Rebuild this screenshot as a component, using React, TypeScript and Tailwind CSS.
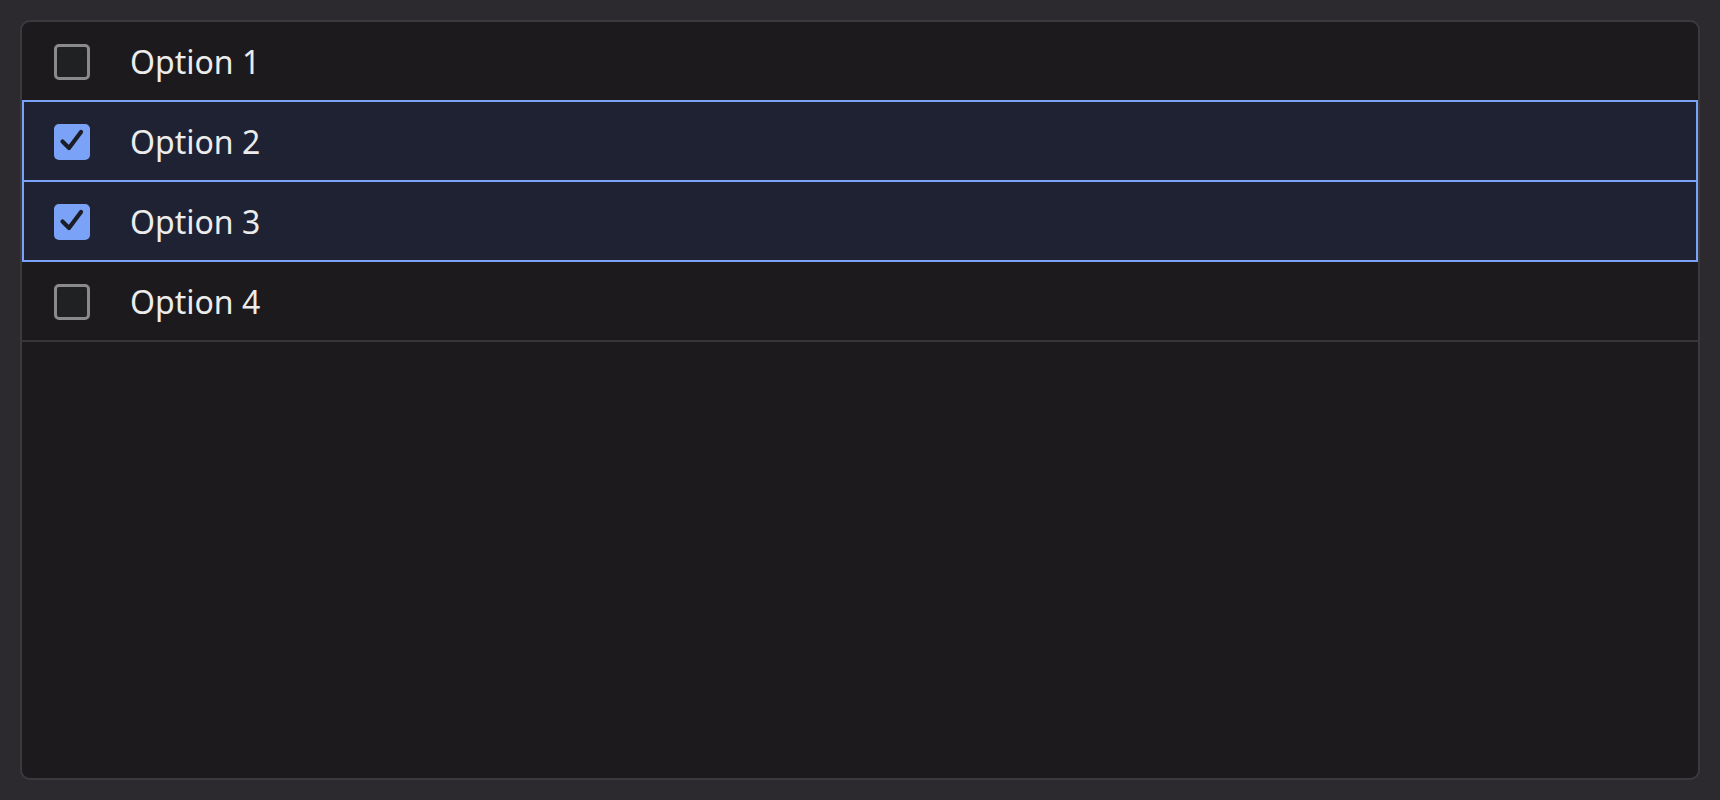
import { useState } from "react";

const options = ["Option 1", "Option 2", "Option 3", "Option 4"];

function Check({ checked }: { checked: boolean }) {
  if (!checked) {
    return <span className="block w-[36px] h-[36px] shrink-0 rounded-[5px] border-[3px] border-[#8a8a8c] bg-[#202123]" />;
  }
  return (
    <span className="flex w-[36px] h-[36px] shrink-0 items-center justify-center rounded-[5px] bg-[#7aa2f7]">
      <svg viewBox="0 0 36 36" className="w-[36px] h-[36px]" fill="none">
        <path d="M8.5 17.5 L15 24 L27 8" stroke="#1c1d27" strokeWidth="4.2" strokeLinecap="round" strokeLinejoin="round" />
      </svg>
    </span>
  );
}

export default function App() {
  const [selected, setSelected] = useState<string[]>(["Option 2", "Option 3"]);

  const toggle = (name: string) =>
    setSelected((s) => (s.includes(name) ? s.filter((x) => x !== name) : [...s, name]));

  return (
    <div className="w-[1720px] h-[800px] bg-[#2c2a2e] p-[20px]" style={{ fontFamily: '"Noto Sans", "Open Sans", sans-serif' }}>
      <div className="h-full rounded-[10px] border-2 border-[#3a393c] bg-[#1c1a1d] overflow-hidden">
        {options.map((name) => {
          const on = selected.includes(name);
          return (
            <div
              key={name}
              onClick={() => toggle(name)}
              className={
                on
                  ? "-mt-[2px] h-[82px] flex items-center gap-[40px] pl-[30px] pt-[2px] border-2 border-[#7aa2f7] bg-[#1f2233] cursor-pointer"
                  : "h-[80px] flex items-center gap-[40px] pl-[32px] pt-[2px] border-b-2 border-[#363538] cursor-pointer"
              }
            >
              <Check checked={on} />
              <span className="text-[32px] leading-none text-[#ececec]">{name}</span>
            </div>
          );
        })}
      </div>
    </div>
  );
}
